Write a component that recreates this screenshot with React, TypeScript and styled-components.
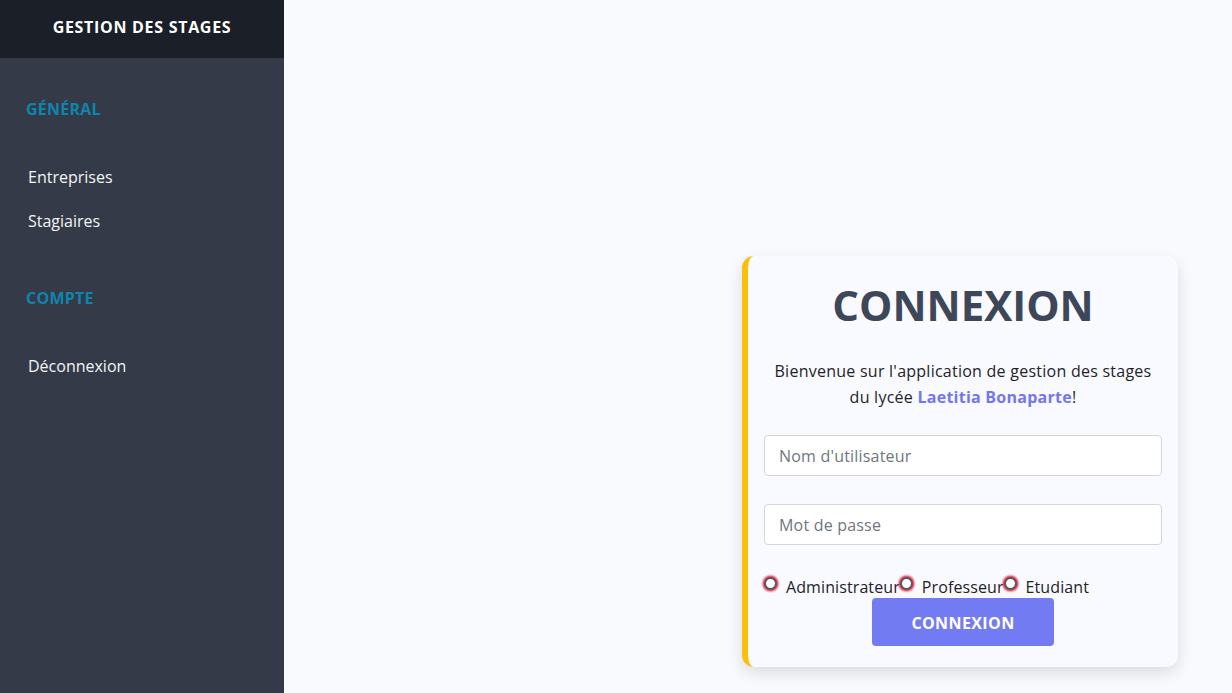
import React from "react";
import styled, { createGlobalStyle } from "styled-components";

const Global = createGlobalStyle`
  html, body { margin: 0; padding: 0; height: 100%; }
  body { font-family: "Open Sans", "Noto Sans", sans-serif; background: #f9fafe; }
  #root { height: 100%; }
  * { box-sizing: border-box; }
`;

const Layout = styled.div`
  display: grid;
  grid-template-columns: 284px 1fr;
  height: 693px;
`;

const Sidebar = styled.aside`
  background: #343a47;
  display: flex;
  flex-direction: column;
`;

const Brand = styled.div`
  height: 58px;
  background: #1b1f27;
  color: #ffffff;
  font-weight: 700;
  font-size: 16px;
  letter-spacing: 0.7px;
  display: flex;
  align-items: center;
  justify-content: center;
  padding-bottom: 4px;
`;

const Section = styled.div<{ $top: number }>`
  padding: ${(p) => p.$top}px 0 0 26px;
`;

const SectionTitle = styled.h3`
  margin: 0 0 46px;
  font-size: 16px;
  letter-spacing: 0.25px;
  font-weight: 700;
  color: #0d85ad;
`;

const NavLink = styled.a`
  display: block;
  color: #f3f4f6;
  font-size: 16px;
  padding-left: 2px;
  height: 44px;
  text-decoration: none;
`;

const Main = styled.main`
  display: flex;
  justify-content: flex-end;
  align-items: flex-end;
  padding: 0 54px 26px 0;
`;

const Card = styled.form`
  width: 436px;
  background: #f9faff;
  border-left: 6px solid #fbbf0a;
  border-radius: 12px;
  box-shadow: 0 6px 16px rgba(0, 0, 0, 0.12);
  padding: 21px 16px 21px;
  display: flex;
  flex-direction: column;
  align-items: center;
`;

const Title = styled.h1`
  margin: 0;
  font-size: 42px;
  font-weight: 700;
  color: #3d4759;
  line-height: 56px;
`;

const Intro = styled.p`
  margin: 25px 0 25px;
  text-align: center;
  font-size: 16px;
  letter-spacing: 0.25px;
  line-height: 26px;
  color: #1f2329;
`;

const Highlight = styled.strong`
  color: #7277f0;
`;

const Input = styled.input<{ $mb: number }>`
  width: 100%;
  height: 41px;
  border: 1px solid #d4d6dc;
  border-radius: 4px;
  background: #ffffff;
  padding: 0 14px;
  font-family: inherit;
  font-size: 16px;
  letter-spacing: 0.2px;
  color: #333;
  margin-bottom: ${(p) => p.$mb}px;
  &::placeholder { color: #707680; }
`;

const RoleRow = styled.div`
  align-self: stretch;
  display: flex;
  align-items: center;
  height: 26px;
  padding-top: 3px;
`;

const RoleLabel = styled.label`
  display: flex;
  align-items: center;
  font-size: 16px;
  letter-spacing: 0.1px;
  color: #1f2329;
`;

const Radio = styled.input`
  appearance: none;
  width: 13px;
  height: 13px;
  margin: 0 9px 7px 0;
  border: 2px solid #555a62;
  border-radius: 50%;
  background: #fff;
  box-shadow: 0 0 2px 1.5px #f0304a;
`;

const Button = styled.button`
  width: 182px;
  height: 48px;
  border: none;
  border-radius: 4px;
  background: #737bf2;
  color: #ffffff;
  font-family: inherit;
  font-size: 16px;
  letter-spacing: 0.4px;
  font-weight: 700;
  padding-top: 2px;
`;

export default function App() {
  return (
    <>
      <Global />
      <Layout>
        <Sidebar>
          <Brand>GESTION DES STAGES</Brand>
          <Section $top={40}>
            <SectionTitle>GÉNÉRAL</SectionTitle>
            <NavLink>Entreprises</NavLink>
            <NavLink>Stagiaires</NavLink>
          </Section>
          <Section $top={33}>
            <SectionTitle>COMPTE</SectionTitle>
            <NavLink>Déconnexion</NavLink>
          </Section>
        </Sidebar>
        <Main>
          <Card onSubmit={(e) => e.preventDefault()}>
            <Title>CONNEXION</Title>
            <Intro>
              Bienvenue sur l'application de gestion des stages
              <br />
              du lycée <Highlight>Laetitia Bonaparte</Highlight>!
            </Intro>
            <Input $mb={28} placeholder="Nom d'utilisateur" />
            <Input $mb={27} type="password" placeholder="Mot de passe" />
            <RoleRow>
              <RoleLabel><Radio type="radio" name="role" />Administrateur</RoleLabel>
              <RoleLabel><Radio type="radio" name="role" />Professeur</RoleLabel>
              <RoleLabel><Radio type="radio" name="role" />Etudiant</RoleLabel>
            </RoleRow>
            <Button type="submit">CONNEXION</Button>
          </Card>
        </Main>
      </Layout>
    </>
  );
}
